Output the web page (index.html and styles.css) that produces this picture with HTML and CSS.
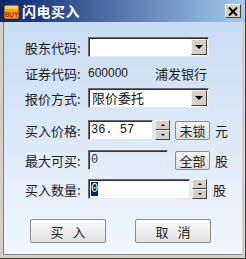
FILE: index.html
```html
<!DOCTYPE html>
<html>
<head>
<meta charset="utf-8">
<link rel="stylesheet" href="styles.css">
</head>
<body>
<div class="window">
  <div class="titlebar">
    <svg class="app-icon" width="15" height="14" viewBox="0 0 15 14">
      <rect x="0.5" y="0.5" width="14" height="13" rx="1.5" fill="#f7a21b" stroke="#b86a08"/>
      <rect x="1" y="1" width="13" height="3" fill="#ffd35a"/>
      <text x="7.5" y="11.5" text-anchor="middle" font-family="Liberation Sans, sans-serif" font-size="6.5" font-weight="bold" fill="#c0180c">BUY</text>
    </svg>
    <span class="title">闪电买入</span>
    <div class="close-btn">
      <svg width="10" height="9" viewBox="0 0 10 9"><path d="M1 0.5 L9 8.5 M9 0.5 L1 8.5" stroke="#000" stroke-width="2"/></svg>
    </div>
  </div>
  <div class="client">
    <div class="row r1">
      <span class="label">股东代码:</span>
      <div class="combo w-combo"><span class="combo-text"></span><span class="drop"><i class="tri"></i></span></div>
    </div>
    <div class="row r2">
      <span class="label">证券代码:</span>
      <span class="code">600000</span>
      <span class="name">浦发银行</span>
    </div>
    <div class="row r3">
      <span class="label">报价方式:</span>
      <div class="combo w-combo"><span class="combo-text">限价委托</span><span class="drop"><i class="tri"></i></span></div>
    </div>
    <div class="row r4">
      <span class="label">买入价格:</span>
      <div class="input w-price">36. 57</div>
      <div class="spin"><span class="spin-up"><i class="tri-up"></i></span><span class="spin-down"><i class="tri-down"></i></span></div>
      <span class="small-btn">未锁</span>
      <span class="unit">元</span>
    </div>
    <div class="row r5">
      <span class="label">最大可买:</span>
      <div class="input disabled w-max">0</div>
      <span class="small-btn">全部</span>
      <span class="unit">股</span>
    </div>
    <div class="row r6">
      <span class="label">买入数量:</span>
      <div class="input w-qty"><span class="sel">0</span></div>
      <div class="spin"><span class="spin-up"><i class="tri-up"></i></span><span class="spin-down"><i class="tri-down"></i></span></div>
      <span class="unit">股</span>
    </div>
    <div class="actions">
      <span class="btn">买 入</span>
      <span class="btn">取 消</span>
    </div>
  </div>
</div>
</body>
</html>
```
FILE: styles.css
```css
html, body {
  margin: 0;
  padding: 0;
}
body {
  width: 246px;
  height: 259px;
  overflow: hidden;
  font-family: "Noto Sans CJK SC", "Liberation Sans", sans-serif;
  font-size: 13px;
  color: #1c1c1c;
}
.window {
  width: 246px;
  height: 259px;
  box-sizing: border-box;
  background: #d4d0c8;
  border-right: 1px solid #404040;
  border-bottom: 1px solid #404040;
  display: flex;
  flex-direction: column;
}
.titlebar {
  height: 22px;
  flex: none;
  background: linear-gradient(to right, #0a246a, #a6caf0);
  display: flex;
  align-items: center;
  padding-left: 4px;
}
.app-icon {
  display: block;
  margin-top: 1px;
}
.title {
  margin-left: 3px;
  color: #fff;
  font-weight: bold;
  font-size: 14px;
  line-height: 22px;
  letter-spacing: 0.5px;
}
.close-btn {
  margin-left: auto;
  margin-right: 4px;
  width: 16px;
  height: 14px;
  box-sizing: border-box;
  background: #d4d0c8;
  border: 1px solid;
  border-color: #fff #404040 #404040 #fff;
  display: flex;
  align-items: center;
  justify-content: center;
}
.close-btn svg { display: block; }
.client {
  flex: 1;
  margin: 0 3px 3px 3px;
  border-left: 1px solid #808080;
  border-bottom: 1px solid #808080;
  background: linear-gradient(#c8dcf4, #f2f6fc);
  padding: 15px 0 0 21px;
}
.row {
  display: flex;
  align-items: center;
  height: 20px;
}
.r2 { margin-top: 6px; }
.r3 { margin-top: 5px; }
.r4 { margin-top: 12px; }
.r5 { margin-top: 10px; }
.r6 { margin-top: 9px; }
.label {
  width: 63px;
  flex: none;
  white-space: nowrap;
}
.combo {
  height: 20px;
  box-sizing: border-box;
  border: 1px solid;
  border-color: #6a6a6a #e8e8e8 #e8e8e8 #6a6a6a;
  box-shadow: inset 1px 1px 0 #303030;
  background: #fff;
  display: flex;
  align-items: center;
}
.w-combo { width: 121px; }
.combo-text {
  flex: 1;
  padding-left: 3px;
  line-height: 18px;
  color: #111;
}
.drop {
  width: 16px;
  height: 16px;
  margin-right: 1px;
  box-sizing: border-box;
  background: #d4d0c8;
  border: 1px solid;
  border-color: #f4f4f4 #404040 #404040 #f4f4f4;
  display: flex;
  align-items: center;
  justify-content: center;
}
.tri {
  width: 0;
  height: 0;
  border-left: 4px solid transparent;
  border-right: 4px solid transparent;
  border-top: 4px solid #000;
}
.code {
  font-family: "Liberation Sans", sans-serif;
  font-size: 12px;
  width: 67px;
}
.input {
  height: 20px;
  box-sizing: border-box;
  border: 1px solid;
  border-color: #6a6a6a #e8e8e8 #e8e8e8 #6a6a6a;
  box-shadow: inset 1px 1px 0 #303030;
  background: #fff;
  font-family: "Liberation Mono", monospace;
  font-size: 12px;
  line-height: 18px;
  padding-left: 2px;
  color: #111;
}
.input.disabled {
  background: transparent;
  color: #333;
}
.w-price { width: 65px; }
.w-max { width: 80px; margin-right: 7px; }
.w-qty { width: 102px; }
.sel {
  background: #0a246a;
  color: #fff;
}
.spin {
  width: 15px;
  height: 20px;
  margin-left: 2px;
  display: flex;
  flex-direction: column;
}
.spin-up, .spin-down {
  flex: 1;
  box-sizing: border-box;
  background: #d4d0c8;
  border: 1px solid;
  border-color: #f4f4f4 #404040 #404040 #f4f4f4;
  display: flex;
  align-items: center;
  justify-content: center;
}
.tri-up {
  width: 0; height: 0;
  border-left: 2px solid transparent;
  border-right: 2px solid transparent;
  border-bottom: 2px solid #000;
}
.tri-down {
  width: 0; height: 0;
  border-left: 2px solid transparent;
  border-right: 2px solid transparent;
  border-top: 2px solid #000;
}
.r4 .spin { margin-right: 5px; }
.small-btn {
  width: 35px;
  height: 19px;
  box-sizing: border-box;
  background: linear-gradient(#f6f6f6, #dedede);
  border: 1px solid #8c8c8c;
  border-radius: 2px;
  display: flex;
  align-items: center;
  justify-content: center;
  line-height: 17px;
}
.unit {
  margin-left: 5px;
}
.r6 .unit { margin-left: 6px; }
.actions {
  display: flex;
  margin-top: 20px;
  margin-left: 5px;
  gap: 29px;
}
.btn {
  width: 76px;
  height: 24px;
  box-sizing: border-box;
  background: linear-gradient(#fafafa, #e2e2e2);
  border: 1px solid #8a8a8a;
  border-radius: 2px;
  display: flex;
  align-items: center;
  justify-content: center;
  white-space: pre;
  word-spacing: 6px;
}
```
